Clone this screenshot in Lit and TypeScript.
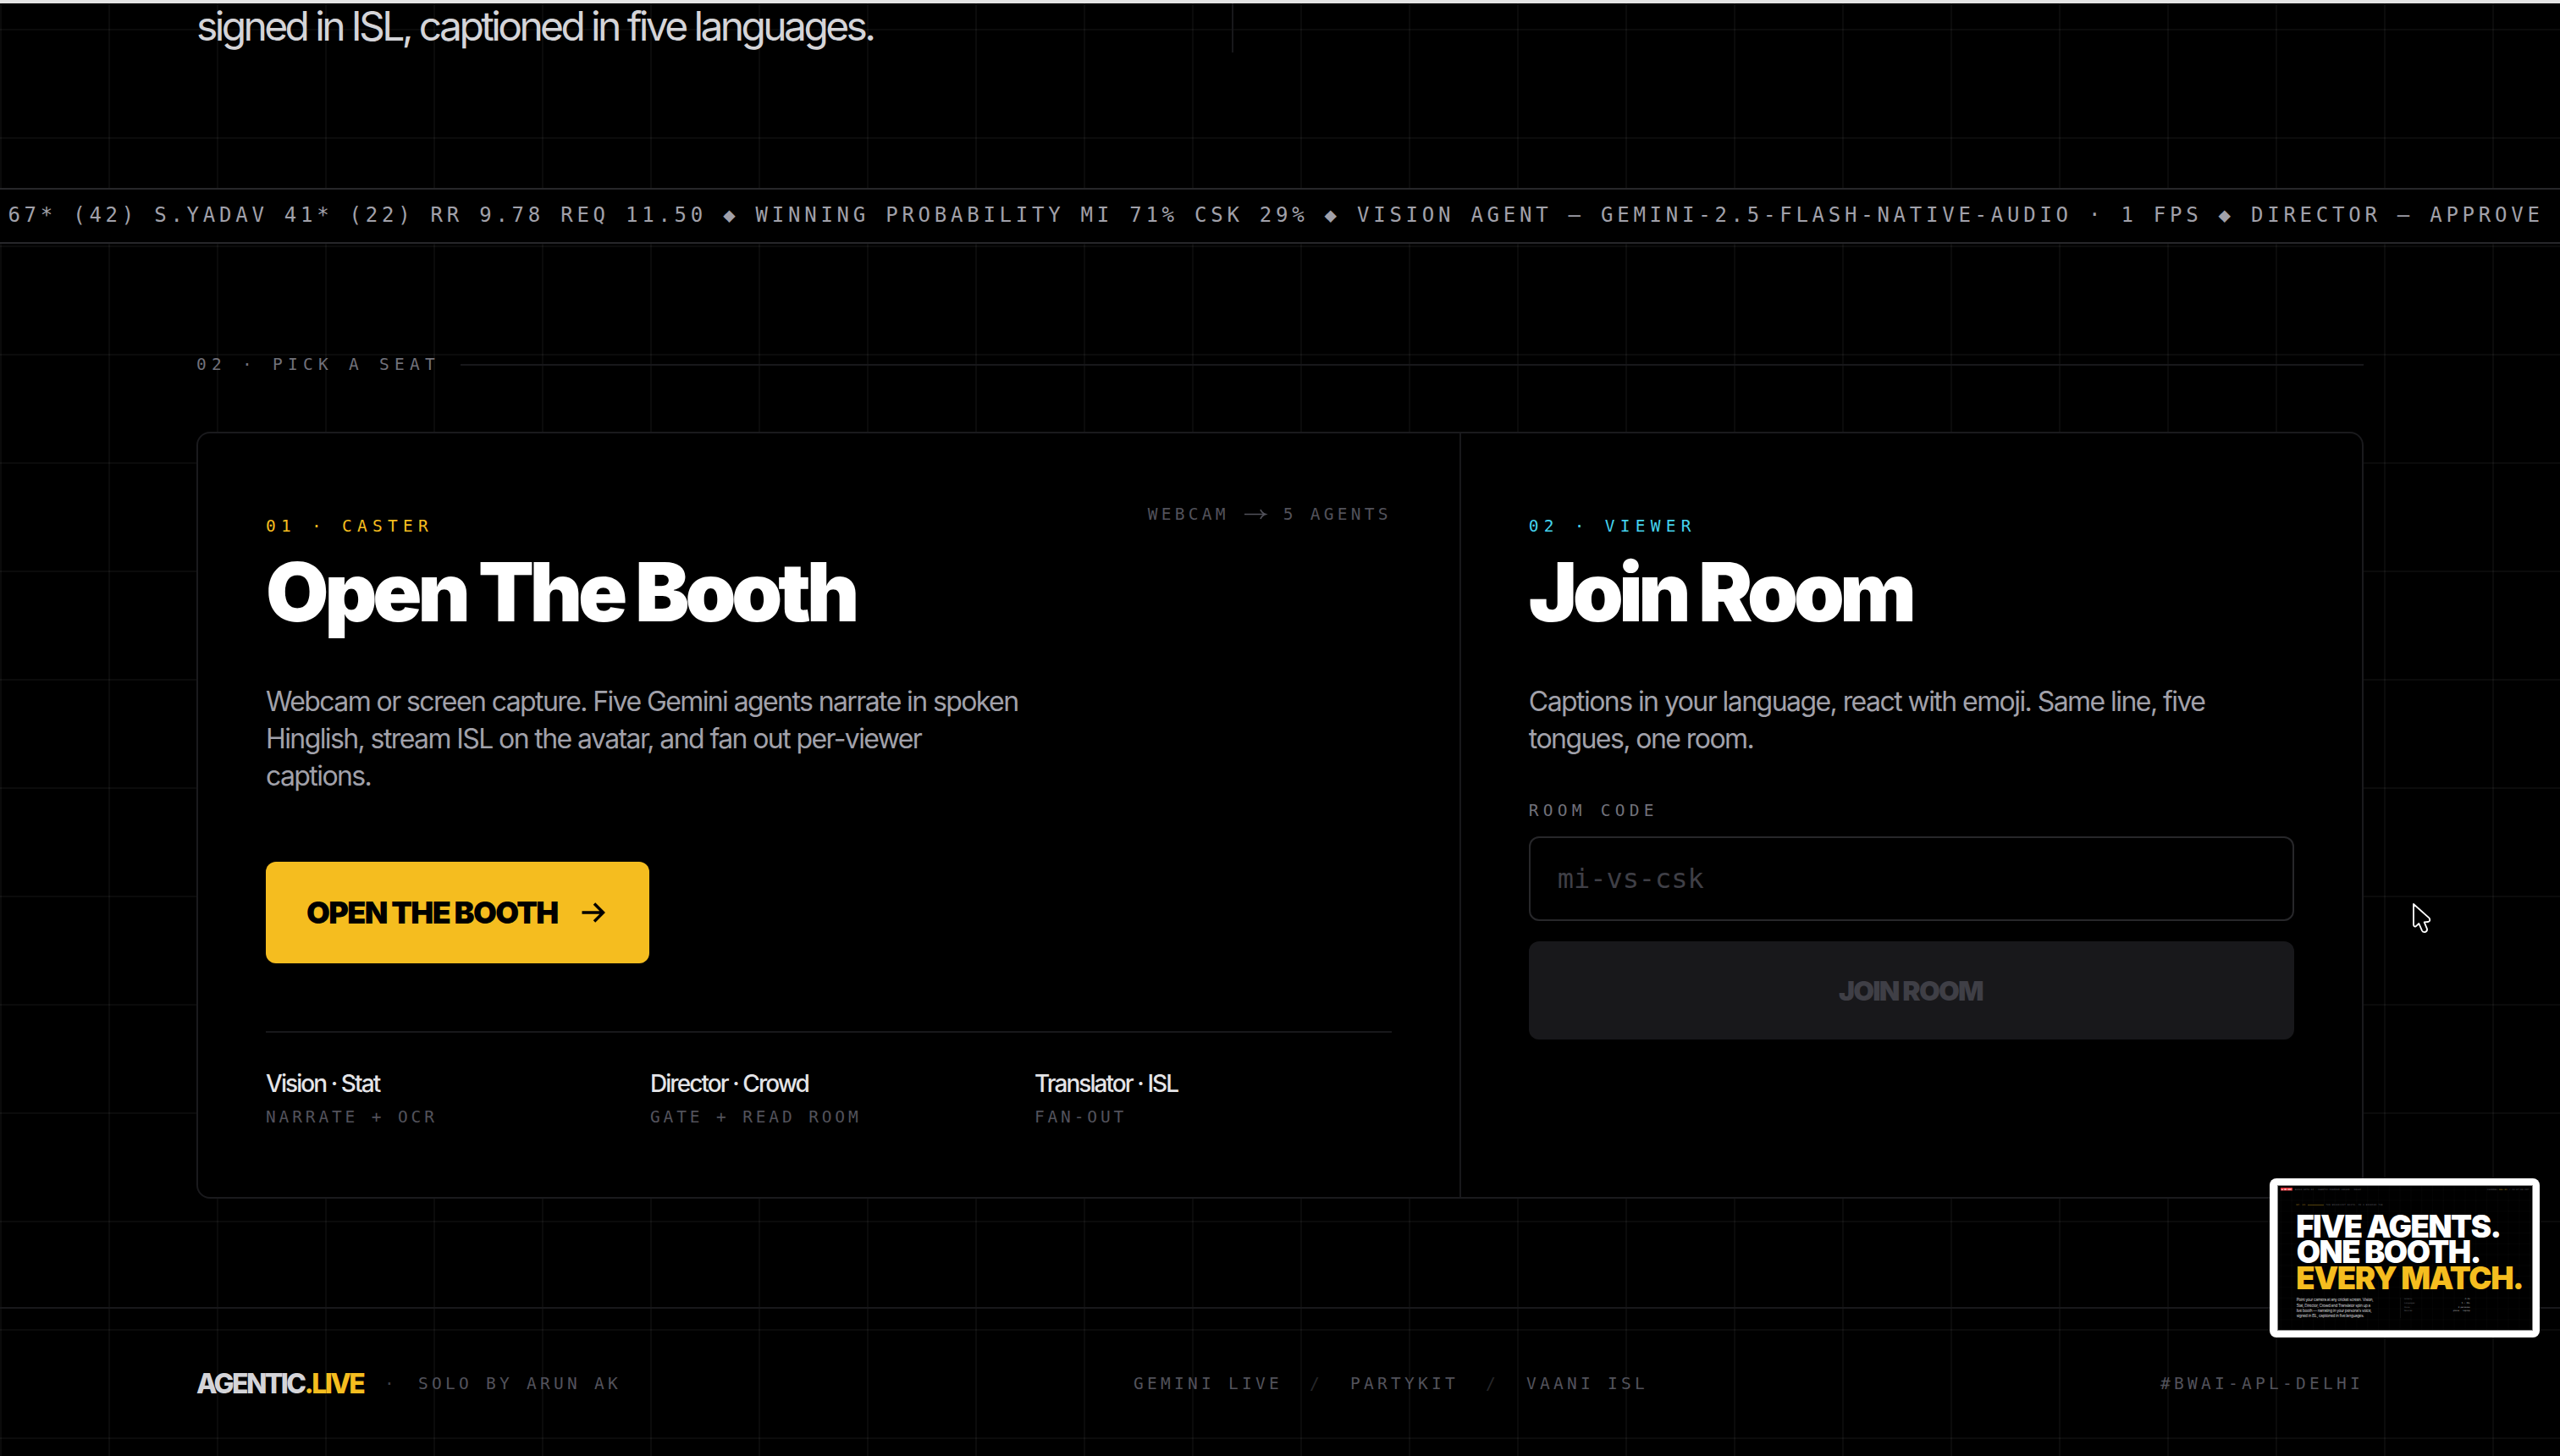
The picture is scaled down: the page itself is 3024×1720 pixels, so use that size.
import { LitElement, html, css, svg } from "lit";
import { customElement } from "lit/decorators.js";

const TICKER = [
  "67* (42) S.YADAV 41* (22) RR 9.78 REQ 11.50",
  "WINNING PROBABILITY MI 71% CSK 29%",
  "VISION AGENT — GEMINI-2.5-FLASH-NATIVE-AUDIO · 1 FPS",
  "DIRECTOR — APPROVE",
];

const ROLES: [string, string][] = [
  ["Vision · Stat", "NARRATE + OCR"],
  ["Director · Crowd", "GATE + READ ROOM"],
  ["Translator · ISL", "FAN-OUT"],
];

@customElement("booth-preview")
export class BoothPreview extends LitElement {
  static styles = css`
    :host {
      display: block;
      width: 319px;
      height: 188px;
      border-radius: 8px;
      background: #fff;
      overflow: hidden;
    }
    svg {
      display: block;
    }
    .big {
      font: 900 36.5px Inter, sans-serif;
      fill: #fff;
    }
    .big.gold {
      fill: #f5bd1f;
    }
    .copy {
      font: 400 4.7px Inter, sans-serif;
      fill: #d4d4d8;
    }
    .tiny {
      font: 400 2.4px "DejaVu Sans Mono", monospace;
      fill: #62626a;
    }
    .tiny.value {
      fill: #c4c4c8;
    }
    .tiny.amber {
      fill: #b58c1c;
    }
    .tiny.badge {
      fill: #fff;
      font-weight: 700;
    }
  `;

  private specs = [
    ["Latency", 9.5, "<1.2s", 7],
    ["Languages", 12.5, "5 + ISL", 10],
    ["Voice", 6.5, "3 personas", 14],
    ["Devices", 9.5, "phone · laptop", 20],
  ] as [string, number, string, number][];

  private copy = [
    ["Point your camera at any cricket screen. Vision,", 91],
    ["Stat, Director, Crowd and Translator spin up a", 87.5],
    ["live booth — narrating in your persona's voice,", 89],
    ["signed in ISL, captioned in five languages.", 80],
  ] as [string, number][];

  render() {
    return html`
      <svg width="319" height="188" viewBox="0 0 319 188">
        <defs>
          <pattern id="g" width="12.8" height="12.8" patternUnits="userSpaceOnUse">
            <path d="M0 0H12.8M0 0V12.8" stroke="#fff" stroke-opacity=".06" stroke-width=".5" />
          </pattern>
        </defs>
        <rect x="9" y="8" width="302" height="172" fill="#8c8c8c" />
        <rect x="10" y="9" width="300" height="170" fill="#000" />
        <rect x="10" y="9" width="300" height="170" fill="url(#g)" />
        <rect x="13" y="11" width="14" height="3.6" rx=".6" fill="#e5353b" />
        <text class="tiny badge" x="14.3" y="13.7" textLength="11.4">● ON AIR</text>
        <text class="tiny" x="30" y="13.6" textLength="78">BUILD WITH AI · AGENTIC PREMIUM LEAGUE · DELHI</text>
        <text class="tiny" x="257" y="13.6" textLength="12">CHANNEL</text>
        <text class="tiny amber" x="271" y="13.6" textLength="9.5">AGL·01</text>
        <text class="tiny" x="283" y="13.6" textLength="23">/ 19:07:00 IST</text>
        <text class="tiny amber" x="31.6" y="32.4" textLength="10.5">EP. 01</text>
        <path d="M45 31.5h19" stroke="#7a5e12" stroke-width=".7" />
        <text class="tiny" x="66.5" y="32.4" textLength="67">THE BROADCAST BOOTH, IN A BROWSER TAB</text>
        <text class="big" x="31.2" y="69.8" textLength="243">FIVE AGENTS.</text>
        <text class="big" x="31.8" y="100.4" textLength="218.5">ONE BOOTH.</text>
        <text class="big gold" x="31.2" y="131.200" textLength="269.5">EVERY MATCH.</text>
        ${this.copy.map(
          ([t, w], i) => svg`<text class="copy" x="31.7" y=${145.4 + i * 6.1} textLength=${w}>${t}</text>`
        )}
        <path d="M154.5 141v24" stroke="#fff" stroke-opacity=".12" stroke-width=".5" />
        ${this.specs.map(
          ([k, kw, v, vw], i) => svg`
            <text class="tiny" x="159" y=${143.2 + i * 4.65} textLength=${kw}>${k}</text>
            <text class="tiny value" x=${236.7 - vw} y=${143.2 + i * 4.65} textLength=${vw}>${v}</text>`
        )}
      </svg>
    `;
  }
}

@customElement("app-root")
export class AppRoot extends LitElement {
  static styles = css`
    :host {
      display: block;
      position: relative;
      box-sizing: border-box;
      width: 3024px;
      height: 1720px;
      overflow: hidden;
      border-top: 4px solid #e4e4e4;
      background-color: #000;
      background-image: linear-gradient(to right, rgba(255, 255, 255, 0.043) 2px, transparent 2px),
        linear-gradient(to bottom, rgba(255, 255, 255, 0.043) 2px, transparent 2px);
      background-size: 128px 128px;
      background-position: 0 30px;
      color: #fff;
      font-family: Inter, "Liberation Sans", sans-serif;
    }
    .edge {
      position: absolute;
      top: -4px;
      left: 0;
      width: 100%;
      height: 2px;
      background: #fff;
    }
    .mono {
      font-family: "DejaVu Sans Mono", "Liberation Mono", monospace;
      font-size: 19.5px;
      line-height: 31px;
      letter-spacing: calc(16px - 0.60205em);
      white-space: pre;
      color: #52525b;
    }
    .wide {
      letter-spacing: calc(18px - 0.60205em);
    }
    .hero {
      display: grid;
      grid-template-columns: 1223px 2px;
      align-items: start;
      height: 218px;
      padding: 0 232px;
    }
    .lede {
      margin: 0;
      font-size: 48px;
      line-height: 54px;
      letter-spacing: -3.63px;
      color: #d4d4d8;
    }
    .rule {
      height: 58px;
      background: #18181b;
    }
    .ticker {
      display: flex;
      align-items: center;
      box-sizing: border-box;
      height: 66px;
      border-top: 2px solid #27272a;
      border-bottom: 2px solid #27272a;
      background: #000;
      padding: 0 0 2px 9.4px;
      overflow: hidden;
    }
    .ticker .mono {
      font-size: 24px;
      line-height: 58px;
      letter-spacing: calc(19.2px - 0.60205em);
      color: #a1a1aa;
    }
    main {
      padding: 128px 232px;
    }
    .label {
      display: flex;
      align-items: center;
      gap: 24px;
      margin-bottom: 64px;
    }
    .label .mono {
      line-height: 30px;
      color: #71717a;
    }
    .label .line {
      flex: 1;
      height: 2px;
      background: #18181b;
    }
    .card {
      display: grid;
      grid-template-columns: 7fr 5fr;
      gap: 2px;
      box-sizing: border-box;
      height: 906px;
      border: 2px solid #1a1a1d;
      border-radius: 16px;
      background: #18181b;
      overflow: hidden;
    }
    .pane {
      padding: 80px;
      background: #000;
    }
    .head {
      display: flex;
      justify-content: space-between;
      align-items: flex-start;
    }
    .flow {
      display: flex;
    }
    .flow svg {
      display: block;
    }
    .eyebrow {
      margin-top: 14px;
      color: #f5bd1f;
    }
    .eyebrow.cyan {
      color: #45d3ee;
    }
    h2 {
      margin: 14px 0 0;
      font-size: 96px;
      font-weight: 900;
      line-height: 96px;
      letter-spacing: -5.04px;
      white-space: nowrap;
    }
    .viewer h2 {
      letter-spacing: -5.35px;
    }
    .text {
      margin: 60px 0 0;
      max-width: 900px;
      font-size: 32px;
      line-height: 44px;
      letter-spacing: -1.6px;
      color: #a1a1aa;
    }
    .viewer .text {
      letter-spacing: -1.56px;
    }
    .cta {
      display: flex;
      align-items: center;
      gap: 24px;
      box-sizing: border-box;
      width: 453px;
      height: 120px;
      margin-top: 79px;
      padding: 0 48px;
      border: 0;
      border-radius: 12px;
      background: #f5bd1f;
      color: #000;
      font: 900 36px/44px Inter, sans-serif;
      letter-spacing: -1.65px;
      white-space: nowrap;
    }
    .roles {
      display: grid;
      grid-template-columns: repeat(3, 1fr);
      gap: 32px;
      margin-top: 80px;
      padding-top: 40px;
      border-top: 2px solid #18181b;
    }
    .role {
      font-size: 28px;
      font-weight: 500;
      line-height: 40px;
      letter-spacing: -1.93px;
      color: #e4e4e7;
    }
    .duty {
      margin-top: 4px;
      letter-spacing: calc(15.6px - 0.60205em);
    }
    .field {
      display: block;
      margin-top: 47px;
      letter-spacing: calc(17px - 0.60205em);
      color: #71717a;
    }
    .code {
      display: block;
      box-sizing: border-box;
      width: 100%;
      height: 100px;
      margin-top: 15px;
      padding: 0 32px;
      border: 2px solid #27272a;
      border-radius: 12px;
      background: #000;
      outline: none;
      font: 400 32px "DejaVu Sans Mono", monospace;
      letter-spacing: calc(19.2px - 0.60205em);
      color: #fff;
    }
    .code::placeholder {
      color: #3f3f46;
      opacity: 1;
    }
    .join {
      display: block;
      width: 100%;
      height: 116px;
      margin-top: 24px;
      padding: 2px 2px 0 0;
      border: 0;
      border-radius: 12px;
      background: #18181b;
      color: #3f3f46;
      font: 900 32px/40px Inter, sans-serif;
      letter-spacing: -1.77px;
    }
    footer {
      display: flex;
      justify-content: space-between;
      align-items: flex-start;
      padding: 69px 232px 0;
      border-top: 2px solid #18181b;
      height: 105px;
    }
    footer .mono {
      line-height: 40px;
    }
    .brand,
    .stack {
      display: flex;
    }
    .brand {
      gap: 24px;
    }
    .stack {
      gap: 32px;
    }
    .name {
      margin-right: 1px;
      font-size: 32px;
      font-weight: 800;
      line-height: 40px;
      letter-spacing: -2.62px;
      color: #d4d4d8;
    }
    .name b {
      font-weight: inherit;
      color: #f5bd1f;
    }
    .mono.dim {
      color: #3f3f46;
    }
    .mono.slash {
      color: #27272a;
    }
    booth-preview {
      position: absolute;
      left: 2681px;
      top: 1388px;
    }
    .pointer {
      position: absolute;
      left: 2820px;
      top: 1036px;
    }
  `;

  render() {
    return html`
      <div class="edge"></div>
      <section class="hero">
        <p class="lede">signed in ISL, captioned in five languages.</p>
        <div class="rule"></div>
      </section>

      <div class="ticker"><span class="mono">${TICKER.join(" ◆ ")}</span></div>

      <main>
        <div class="label">
          <span class="mono wide">02 · PICK A SEAT</span>
          <span class="line"></span>
        </div>

        <div class="card">
          <section class="pane">
            <div class="head">
              <div>
                <div class="mono wide eyebrow">01 · CASTER</div>
                <h2>Open The Booth</h2>
              </div>
              <div class="mono flow"><span>WEBCAM </span><svg width="32" height="31" viewBox="0 0 32 31" fill="none" stroke="#52525b" stroke-width="1.7"><path d="M2 15.5H26.500M21 10q1.500 4 6 5.500q-4.500 1.500-6 5.500" /></svg><span> 5 AGENTS</span></div>
            </div>
            <p class="text">
              Webcam or screen capture. Five Gemini agents narrate in spoken Hinglish, stream ISL on the
              avatar, and fan out per-viewer captions.
            </p>
            <button class="cta">
              <span>OPEN THE BOOTH</span>
              <svg width="36" height="36" viewBox="0 0 36 36" fill="none" stroke="#000" stroke-width="3.500">
                <path d="M4.500 18H29.500M19 7.500L29.500 18L19 28.500" />
              </svg>
            </button>
            <div class="roles">
              ${ROLES.map(
                ([role, duty]) => html`<div>
                  <div class="role">${role}</div>
                  <div class="mono duty">${duty}</div>
                </div>`
              )}
            </div>
          </section>

          <section class="pane viewer">
            <div class="mono wide eyebrow cyan">02 · VIEWER</div>
            <h2>Join Room</h2>
            <p class="text">Captions in your language, react with emoji. Same line, five tongues, one room.</p>
            <label class="mono field" for="code">ROOM CODE</label>
            <input id="code" class="code" placeholder="mi-vs-csk" />
            <button class="join">JOIN ROOM</button>
          </section>
        </div>
      </main>

      <footer>
        <div class="brand">
          <span class="name">AGENTIC<b>.LIVE</b></span>
          <span class="mono dim">·</span>
          <span class="mono">SOLO BY ARUN AK</span>
        </div>
        <div class="stack">
          <span class="mono">GEMINI LIVE</span>
          <span class="mono slash">/</span>
          <span class="mono">PARTYKIT</span>
          <span class="mono slash">/</span>
          <span class="mono">VAANI ISL</span>
        </div>
        <span class="mono">#BWAI-APL-DELHI</span>
      </footer>

      <booth-preview></booth-preview>
      <svg class="pointer" width="80" height="80" viewBox="0 0 240 240">
        <path
          d="M93 84L149 134Q154 144 145 147L131 148L141 172Q142 181 134 183Q126 184 123 178L112 153L101 163Q94 165 93 157Z"
          fill="#000"
          stroke="#fff"
          stroke-width="5.500"
          stroke-linejoin="round"
        />
      </svg>
    `;
  }
}
